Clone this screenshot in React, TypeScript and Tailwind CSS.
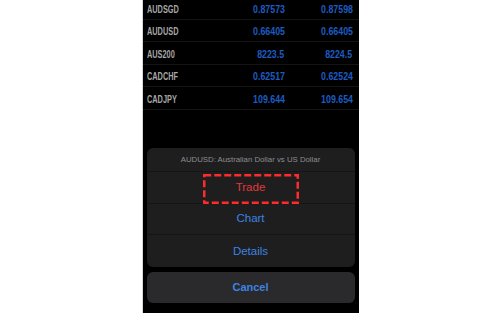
import React from 'react';

interface Quote {
    symbol: string;
    bid: string;
    ask: string;
}

const quotes: Quote[] = [
    { symbol: 'AUDSGD', bid: '0.87573', ask: '0.87598' },
    { symbol: 'AUDUSD', bid: '0.66405', ask: '0.66405' },
    { symbol: 'AUS200', bid: '8223.5', ask: '8224.5' },
    { symbol: 'CADCHF', bid: '0.62517', ask: '0.62524' },
    { symbol: 'CADJPY', bid: '109.644', ask: '109.654' },
];

const font = { fontFamily: '"Liberation Sans", Arial, sans-serif' };

const QuoteRow: React.FC<{ quote: Quote }> = ({ quote }) => (
    <div className="flex h-[22.5px] items-center border-b border-[#141414] pl-[4px] pr-[6px]">
        <span className="flex-1 leading-none">
            <span className="inline-block origin-left scale-x-[0.7] text-[10.5px] font-bold text-[#a6a6a6]">
                {quote.symbol}
            </span>
        </span>
        <span className="w-[60px] text-right leading-none">
            <span className="inline-block origin-right scale-x-[0.84] text-[10.5px] font-bold text-[#1c5cc2]">
                {quote.bid}
            </span>
        </span>
        <span className="w-[68px] text-right leading-none">
            <span className="inline-block origin-right scale-x-[0.84] text-[10.5px] font-bold text-[#1c5cc2]">
                {quote.ask}
            </span>
        </span>
    </div>
);

const SheetButton: React.FC<{ label: string; className: string; last?: boolean; children?: React.ReactNode }> = ({
    label,
    className,
    last,
    children,
}) => (
    <div className={`relative flex h-[31.7px] items-center justify-center ${last ? '' : 'border-b border-[#151515]'}`}>
        <span className={className}>{label}</span>
        {children}
    </div>
);

export default function App() {
    return (
        <div className="flex h-[313px] w-[500px] justify-center overflow-hidden bg-white" style={font}>
            <div className="flex h-full w-[217px] flex-col border-l border-[#d6d6d6] bg-black">
                <div className="mt-[-3px]">
                    {quotes.map((q) => (
                        <QuoteRow key={q.symbol} quote={q} />
                    ))}
                </div>

                <div className="flex-1" />

                <div className="flex flex-col gap-[5px] px-[4px] pb-[10px]">
                    <div className="overflow-hidden rounded-[6px] bg-[#1e1e1e]">
                        <div className="flex h-[24px] items-center justify-center border-b border-[#151515] text-[7.8px] text-[#8d8d92]">
                            AUDUSD: Australian Dollar vs US Dollar
                        </div>
                        <SheetButton label="Trade" className="text-[11.5px] text-[#e2393a]">
                            <svg className="absolute left-[56px] top-[2px]" width="96" height="30" viewBox="0 0 96 30">
                                <rect
                                    x="1.25"
                                    y="1.25"
                                    width="93.5"
                                    height="27.5"
                                    fill="none"
                                    stroke="#ff2b2b"
                                    strokeWidth="2.5"
                                    strokeDasharray="7 3"
                                />
                            </svg>
                        </SheetButton>
                        <SheetButton label="Chart" className="text-[11.5px] text-[#3c83e2]" />
                        <SheetButton label="Details" className="text-[11.5px] text-[#3c83e2]" last />
                    </div>
                    <div className="flex h-[31px] items-center justify-center rounded-[6px] bg-[#2a2a2c]">
                        <span className="text-[11px] font-bold text-[#3c83e2]">Cancel</span>
                    </div>
                </div>
            </div>
        </div>
    );
}
